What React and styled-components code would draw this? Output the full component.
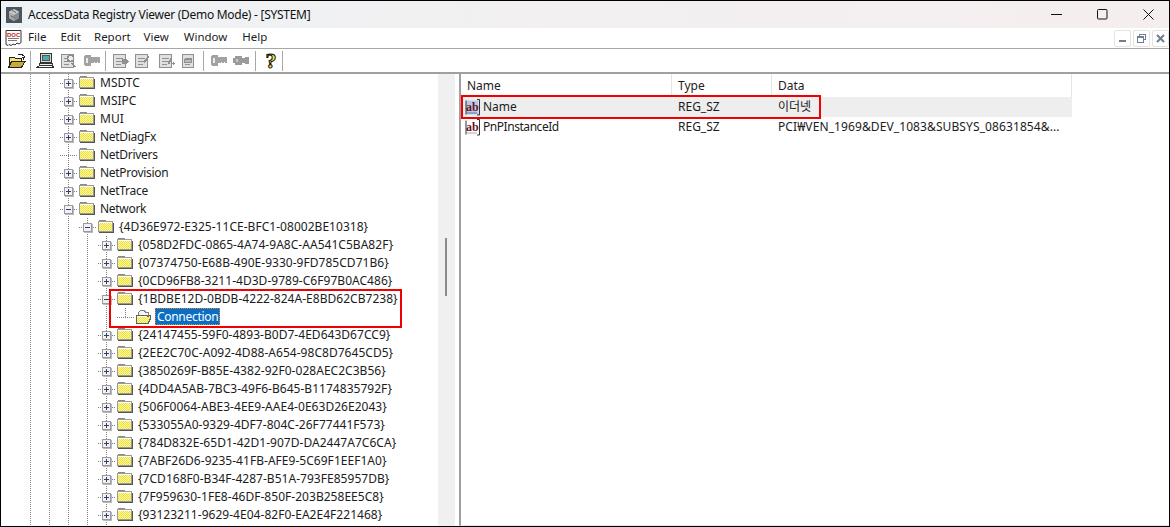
import React from 'react'
import styled, { createGlobalStyle } from 'styled-components'

const GlobalStyle = createGlobalStyle`
  html, body {
    margin: 0;
    padding: 0;
    background: #fff;
  }
  * {
    box-sizing: border-box;
  }
`

const FONT = `"Noto Sans", "Noto Sans CJK KR", sans-serif`

/* ---------- data ---------- */

const level2 = [
  ['MSDTC', 'plus'],
  ['MSIPC', 'plus'],
  ['MUI', 'plus'],
  ['NetDiagFx', 'plus'],
  ['NetDrivers', 'leaf'],
  ['NetProvision', 'plus'],
  ['NetTrace', 'plus'],
  ['Network', 'minus'],
]

const guidsBefore = [
  '{058D2FDC-0865-4A74-9A8C-AA541C5BA82F}',
  '{07374750-E68B-490E-9330-9FD785CD71B6}',
  '{0CD96FB8-3211-4D3D-9789-C6F97B0AC486}',
]

const guidsAfter = [
  '{24147455-59F0-4893-B0D7-4ED643D67CC9}',
  '{2EE2C70C-A092-4D88-A654-98C8D7645CD5}',
  '{3850269F-B85E-4382-92F0-028AEC2C3B56}',
  '{4DD4A5AB-7BC3-49F6-B645-B1174835792F}',
  '{506F0064-ABE3-4EE9-AAE4-0E63D26E2043}',
  '{533055A0-9329-4DF7-804C-26F77441F573}',
  '{784D832E-65D1-42D1-907D-DA2447A7C6CA}',
  '{7ABF26D6-9235-41FB-AFE9-5C69F1EEF1A0}',
  '{7CD168F0-B34F-4287-B51A-793FE85957DB}',
  '{7F959630-1FE8-46DF-850F-203B258EE5C8}',
  '{93123211-9629-4E04-82F0-EA2E4F221468}',
]

const treeRows = [
  ...level2.map(([label, kind]) => ({ label, kind, level: 2 })),
  { label: '{4D36E972-E325-11CE-BFC1-08002BE10318}', kind: 'minus', level: 3 },
  ...guidsBefore.map((label) => ({ label, kind: 'plus', level: 4 })),
  { label: '{1BDBE12D-0BDB-4222-824A-E8BD62CB7238}', kind: 'minus', level: 4 },
  { label: 'Connection', kind: 'last', level: 5, selected: true },
  ...guidsAfter.map((label) => ({ label, kind: 'plus', level: 4 })),
]

const menus = [
  ['File', 14],
  ['Edit', 13],
  ['Report', 13],
  ['View', 15],
  ['Window', 15],
  ['Help', 0],
]

// the reference font runs narrower on lowercase words and a bit wider on the guids
const trackingFor = (label) => {
  if (label.startsWith('{')) return '0.03px'
  return /[a-z]/.test(label) ? '-0.3px' : '0'
}

/* ---------- icons ---------- */

const FolderIcon = ({ open }) => (
  <svg width="16" height="15" viewBox="0 0 16 15" shapeRendering="crispEdges">
    <defs>
      <pattern id={open ? 'dither-open' : 'dither'} width="2" height="2" patternUnits="userSpaceOnUse">
        <rect width="2" height="2" fill="#fff9a0" />
        <rect width="1" height="1" fill="#ecdf3e" />
        <rect x="1" y="1" width="1" height="1" fill="#ecdf3e" />
      </pattern>
    </defs>
    {open ? (
      <>
        <path d="M2.500 3.500l2-2h4l1 2h3v3h-10z" fill="#f4f4f4" stroke="#808080" />
        <path d="M1 7h10l3-1v4l-2 4H1z" fill="url(#dither-open)" />
        <path d="M.5 6.500h10l1 1 3-1v3l-2.500 5H.5z" fill="none" stroke="#606060" />
        <path d="M1 7.500h9" stroke="#fff" />
      </>
    ) : (
      <>
        <path d="M1.500 3V1.500h6l2 2" fill="#e0e0e0" stroke="#8a8a8a" />
        <rect x="0.500" y="2.500" width="14" height="10" fill="url(#dither)" stroke="#9a9a9a" />
        <rect x="1" y="3" width="13" height="1" fill="#fff" />
        <path d="M15 3.500v10H1" fill="none" stroke="#555" />
      </>
    )}
  </svg>
)

const ExpandBox = ({ minus }) => (
  <svg width="10" height="10" viewBox="0 0 10 10" shapeRendering="crispEdges">
    <rect x="0.500" y="0.500" width="8" height="8" fill="#f2f2f2" stroke="#9a9a9a" />
    <rect x="9" y="1" width="1" height="9" fill="#b8b8b8" />
    <rect x="1" y="9" width="9" height="1" fill="#b8b8b8" />
    <rect x="2" y="4" width="5" height="1" fill="#2b3f7e" />
    {!minus && <rect x="4" y="2" width="1" height="5" fill="#2b3f7e" />}
  </svg>
)

const AppIcon = () => (
  <svg width="16" height="16" viewBox="0 0 16 16">
    <rect width="16" height="16" fill="#4a5560" />
    <path d="M8 2l5 2.500v6.500l-5 3-5-3V4.500z" fill="#c9c9c9" />
    <path d="M8 8l5-3v6l-5 3z" fill="#8a8a8a" />
    <path d="M8 8L3 5v6l5 3z" fill="#a8a8a8" />
    <path d="M6 3.500l4 2M5 9l3 1.500" stroke="#666" fill="none" />
  </svg>
)

const DocText = styled.text`
  font: bold 6px "Liberation Sans", sans-serif;
  fill: #d01818;
`

const DocIcon = () => (
  <svg width="17" height="17" viewBox="0 0 17 17">
    <path d="M1 .5h15v12l-2 1.500-2-1-2 2-2-1-2 1.500-2-1-1 1-2-1z" fill="#fff" stroke="#333" />
    <DocText x="2" y="6.500">DOC</DocText>
    <path d="M3 8.500h11M3 10.500h9" stroke="#777" />
  </svg>
)

const OpenIcon = () => (
  <svg width="18" height="16" viewBox="0 0 18 16" shapeRendering="crispEdges">
    <path d="M1 4h5l1 1h6v3H4l-3 6z" fill="#f4e66a" stroke="#222" />
    <path d="M3.500 8.500h13.500l-3.500 6h-13z" fill="#c9a93a" stroke="#222" />
    <path d="M10 1h3l3 2v2M14 4h3l-1.500 2z" fill="none" stroke="#222" />
  </svg>
)

const ComputerIcon = () => (
  <svg width="18" height="17" viewBox="0 0 18 17" shapeRendering="crispEdges">
    <rect x="4.500" y="1.500" width="11" height="9" fill="#d8d8d8" stroke="#333" />
    <rect x="6.500" y="3.500" width="7" height="5" fill="#49aeb0" stroke="#555" />
    <path d="M3.500 11.500h13v2h-13z" fill="#eee" stroke="#333" />
    <path d="M.5 15.500l3-2h13l1 2z" fill="#fff" stroke="#333" />
  </svg>
)

const PageGray = ({ kind }) => (
  <svg width="17" height="16" viewBox="0 0 17 16" shapeRendering="crispEdges">
    <rect x="1.500" y="1.500" width={kind === 'report' ? 11 : 12} height="13" fill="#e0e0e0" stroke="#909090" strokeWidth="1.500" />
    <path d="M4 5h7M4 8h7M4 11h5" stroke="#909090" />
    {kind === 'search' && <path d="M10.500 8.500a3 3 0 1 1 .1 0zM12 10l3.500 4" fill="#eee" stroke="#8c8c8c" strokeWidth="1.500" />}
    {kind === 'arrow' && <path d="M10 6h3V4l4 4.500-4 4.500v-2h-3z" fill="#909090" />}
    {kind === 'edit' && <path d="M9 9l5-6 1.500 1-5 6z" fill="#909090" />}
    {kind === 'plus' && <path d="M10 10l3-5 1 1-3 5zM15 9v3M13.500 10.500h3" fill="#909090" stroke="#909090" />}
    {kind === 'report' && <path d="M3 6.500h7v3H3z" fill="#bbb" stroke="#909090" />}
  </svg>
)

const KeyGray = ({ barrel }) => (
  <svg width="18" height="13" viewBox="0 0 18 13" shapeRendering="crispEdges">
    {barrel ? (
      <>
        <path d="M1 4h2V2h7v2h3V3h4v7h-4V9h-3v2H3V9H1z" fill="#9b9b9b" />
        <rect x="4" y="5" width="2" height="3" fill="#c8c8c8" />
      </>
    ) : (
      <>
        <path d="M2 1h5l1 1v9l-1 1H2l-1-1V2z" fill="#a2a2a2" />
        <rect x="3" y="4" width="2" height="5" fill="#eaeaea" />
        <path d="M8 3h9v6h-2V8h-1v1h-2V8h-1v1H8z" fill="#a2a2a2" />
      </>
    )}
  </svg>
)

const HelpGlyph = styled.span`
  font: bold 22px/20px "Liberation Serif", serif;
  color: #f7e93c;
  -webkit-text-stroke: 1px #111;
  width: 12px;
  text-align: center;
`

const AbText = styled.text`
  font: bold 12px "Liberation Serif", serif;
  fill: #6e0f24;
`

const AbIcon = ({ tinted }) => (
  <svg width="17" height="17" viewBox="0 0 17 17">
    <path d="M1 1.500h12.500v14H1z" fill={tinted ? '#b4cde6' : '#fff'} />
    <path d="M12 .5h2.500v15.500H12M1 1.500v14" fill="none" stroke="#333" />
    <AbText x="1" y="11.500">ab</AbText>
    <path d="M2 14h10" stroke={tinted ? '#5a7aa0' : '#aaa'} />
  </svg>
)

/* ---------- window chrome ---------- */

const Frame = styled.div`
  width: 1170px;
  height: 527px;
  border: 1px solid #000;
  display: flex;
  flex-direction: column;
  overflow: hidden;
  font-family: ${FONT};
  font-size: 12px;
  color: #1c1c1c;
  background: #fff;
`

const TitleBar = styled.header`
  height: 27px;
  flex: none;
  display: flex;
  align-items: center;
  padding-left: 5px;
  background: linear-gradient(90deg, #edf2f5 0%, #f2f0f1 45%, #f5eeef 100%);
`

const Title = styled.span`
  margin-left: 6px;
  font-size: 12px;
  letter-spacing: -0.28px;
  color: #111;
  flex: 1;
`

const WinButton = styled.div`
  width: 46px;
  height: 27px;
  padding-left: 4px;
  display: flex;
  align-items: center;
  justify-content: center;
`

const MenuBar = styled.nav`
  height: 21px;
  flex: none;
  display: flex;
  align-items: center;
  padding-left: 4px;
  border-bottom: 1px solid #a8a8a8;
`

const MenuList = styled.div`
  display: flex;
  margin-left: 6px;
  margin-top: -3px;
  flex: 1;
`

const MenuItem = styled.span`
  font-size: 11.5px;
  margin-right: ${(p) => p.$gap}px;
`

const MdiButton = styled.div`
  width: 17px;
  height: 17px;
  margin-right: 2px;
  border: 1px solid #e4e4e4;
  border-radius: 2px;
  display: flex;
  align-items: center;
  justify-content: center;

  &:last-child {
    margin-right: 0;
  }
`

const ToolBar = styled.div`
  height: 25px;
  flex: none;
  display: flex;
  align-items: center;
  padding-left: 7px;
  border-bottom: 2px solid #a0a0a0;
`

const ToolButton = styled.div`
  width: ${(p) => p.$w}px;
  display: flex;
  justify-content: center;
  flex: none;
`

const ToolSep = styled.div`
  width: 1px;
  height: 20px;
  background: #a8a8a8;
  flex: none;
  margin: 0 ${(p) => p.$right}px 0 ${(p) => p.$left}px;
`

/* ---------- tree ---------- */

const Main = styled.div`
  flex: 1;
  min-height: 0;
  display: flex;
`

const TreePane = styled.div`
  width: 437px;
  flex: none;
  padding-left: 20px;
  overflow: hidden;
  position: relative;
`

const ScrollTrack = styled.div`
  width: 17px;
  flex: none;
  background: #f0f0f0;
  padding: 164px 0 0 7px;
`

const ScrollThumb = styled.div`
  width: 2px;
  height: 58px;
  background: #8b8b8b;
`

const Splitter = styled.div`
  width: 4px;
  flex: none;
  background: #fff;
`

const TreeRow = styled.div`
  height: 18px;
  display: flex;
  align-items: flex-start;
  white-space: nowrap;
`

const dotted = 'linear-gradient(#808080 50%, transparent 50%)'
const dottedH = 'linear-gradient(90deg, #808080 50%, transparent 50%)'

const Guide = styled.div`
  width: 19px;
  height: 18px;
  flex: none;
  background: ${dotted} 9px 0 / 1px 2px repeat-y;
`

const Connector = styled.div`
  width: 19px;
  height: 18px;
  flex: none;
  display: flex;
  align-items: center;
  padding: 2px 0 0 5px;
  background:
    ${dottedH} 9px 9px / 2px 1px repeat-x,
    ${dotted} 9px 0 / 1px 2px repeat-y;
`

const LastConnector = styled(Connector)`
  clip-path: inset(0 0 8px 0);
`

const FolderCell = styled.div`
  width: 19px;
  height: 18px;
  flex: none;
  display: flex;
  padding: 1px 0 0 1px;
`

const TreeLabel = styled.span`
  height: 17px;
  line-height: 17px;
  padding: 0 2px;
  margin-left: 1px;
  letter-spacing: ${(p) => p.$tracking};
  ${(p) => p.$selected && `
    background: #0a6fc4;
    color: #fff;
    outline: 1px dotted #e08a20;
    outline-offset: -1px;
  `}
`

const Callout = styled.div`
  position: absolute;
  border: 2px solid #f00000;
  pointer-events: none;
`

const TreeCallout = styled(Callout)`
  left: 108px;
  top: 215px;
  width: 293px;
  height: 39px;
`

const TreeItem = ({ label, kind, level, selected }) => {
  const Conn = kind === 'last' ? LastConnector : Connector
  return (
    <TreeRow>
      {Array.from({ length: level }, (_, i) => <Guide key={i} />)}
      <Conn>
        {(kind === 'plus' || kind === 'minus') && <ExpandBox minus={kind === 'minus'} />}
      </Conn>
      <FolderCell><FolderIcon open={selected} /></FolderCell>
      <TreeLabel $selected={selected} $tracking={trackingFor(label)}>{label}</TreeLabel>
    </TreeRow>
  )
}

/* ---------- list ---------- */

const ListPane = styled.section`
  flex: 1;
  min-width: 0;
  border-left: 2px solid #a0a0a0;
  border-bottom: 1px solid #e6e6e6;
  position: relative;
`

const columns = '211px 100px 300px'

const ListHeader = styled.div`
  display: grid;
  grid-template-columns: ${columns};
  height: 23px;
  width: 611px;
`

const HeaderCell = styled.div`
  padding: 2px 0 0 6px;
  line-height: 20px;
  border-right: 1px solid #e4e4e4;
`

const ListRow = styled.div`
  display: grid;
  grid-template-columns: ${columns};
  height: 20px;
  width: 611px;
  line-height: 20px;
  background: ${(p) => (p.$active ? '#eeeeee' : 'transparent')};
`

const NameCell = styled.div`
  display: flex;
  align-items: center;
  gap: 1px;
  padding-left: 4px;
`

const NameText = styled.span`
  letter-spacing: ${(p) => (p.$long ? '-0.45px' : '0')};
`

const ValueCell = styled.div`
  padding-left: 6px;
  white-space: nowrap;
  letter-spacing: ${(p) => (p.$wide ? '0.1px' : '0')};
`

const ListCallout = styled(Callout)`
  left: 0;
  top: 21px;
  width: 360px;
  height: 24px;
`

const TitleControls = () => (
  <>
    <WinButton>
      <svg width="11" height="11"><path d="M0 5.500h11" stroke="#111" /></svg>
    </WinButton>
    <WinButton>
      <svg width="11" height="11"><rect x="0.500" y="0.500" width="9.500" height="9.500" rx="1" fill="none" stroke="#111" /></svg>
    </WinButton>
    <WinButton>
      <svg width="11" height="11"><path d="M.5.500l10 10M10.500.500l-10 10" stroke="#111" /></svg>
    </WinButton>
  </>
)

const App = () => (
  <>
    <GlobalStyle />
    <Frame>
      <TitleBar>
        <AppIcon />
        <Title>AccessData Registry Viewer (Demo Mode) - [SYSTEM]</Title>
        <TitleControls />
      </TitleBar>

      <MenuBar>
        <DocIcon />
        <MenuList>
          {menus.map(([name, gap]) => <MenuItem key={name} $gap={gap}>{name}</MenuItem>)}
        </MenuList>
        <MdiButton>
          <svg width="9" height="9"><rect x="1" y="6" width="7" height="2" fill="#6f7f8f" /></svg>
        </MdiButton>
        <MdiButton>
          <svg width="11" height="11" shapeRendering="crispEdges"><path d="M3.500 3V1.500h6v5H8M1.500 3.500h6v6h-6zM1.500 4.500h6" fill="none" stroke="#6f7f8f" /></svg>
        </MdiButton>
        <MdiButton>
          <svg width="9" height="9"><path d="M1 1l7 7M8 1l-7 7" stroke="#6f7f8f" strokeWidth="2" /></svg>
        </MdiButton>
      </MenuBar>

      <ToolBar>
        <ToolButton $w={18}><OpenIcon /></ToolButton>
        <ToolSep $left={4} $right={5} />
        <ToolButton $w={18}><ComputerIcon /></ToolButton>
        <ToolButton $w={28}><PageGray kind="search" /></ToolButton>
        <ToolButton $w={20}><KeyGray /></ToolButton>
        <ToolSep $left={3} $right={5} />
        <ToolButton $w={18}><PageGray kind="arrow" /></ToolButton>
        <ToolButton $w={26}><PageGray kind="edit" /></ToolButton>
        <ToolButton $w={22}><PageGray kind="plus" /></ToolButton>
        <ToolButton $w={24}><PageGray kind="report" /></ToolButton>
        <ToolSep $left={2} $right={6} />
        <ToolButton $w={18}><KeyGray /></ToolButton>
        <ToolButton $w={26}><KeyGray barrel /></ToolButton>
        <ToolSep $left={1} $right={8} />
        <ToolButton $w={14}><HelpGlyph>?</HelpGlyph></ToolButton>
        <ToolSep $left={4} $right={0} />
      </ToolBar>

      <Main>
        <TreePane>
          {treeRows.map((row) => <TreeItem key={row.label} {...row} />)}
          <TreeRow>
            {Array.from({ length: 5 }, (_, i) => <Guide key={i} />)}
          </TreeRow>
          <TreeCallout />
        </TreePane>
        <ScrollTrack><ScrollThumb /></ScrollTrack>
        <Splitter />
        <ListPane>
          <ListHeader>
            <HeaderCell>Name</HeaderCell>
            <HeaderCell>Type</HeaderCell>
            <HeaderCell>Data</HeaderCell>
          </ListHeader>
          <ListRow $active>
            <NameCell><AbIcon tinted /><NameText>Name</NameText></NameCell>
            <ValueCell>REG_SZ</ValueCell>
            <ValueCell>이더넷</ValueCell>
          </ListRow>
          <ListRow>
            <NameCell><AbIcon /><NameText $long>PnPInstanceId</NameText></NameCell>
            <ValueCell>REG_SZ</ValueCell>
            <ValueCell $wide>PCI₩VEN_1969&amp;DEV_1083&amp;SUBSYS_08631854&amp;...</ValueCell>
          </ListRow>
          <ListCallout />
        </ListPane>
      </Main>
    </Frame>
  </>
)

export default App
